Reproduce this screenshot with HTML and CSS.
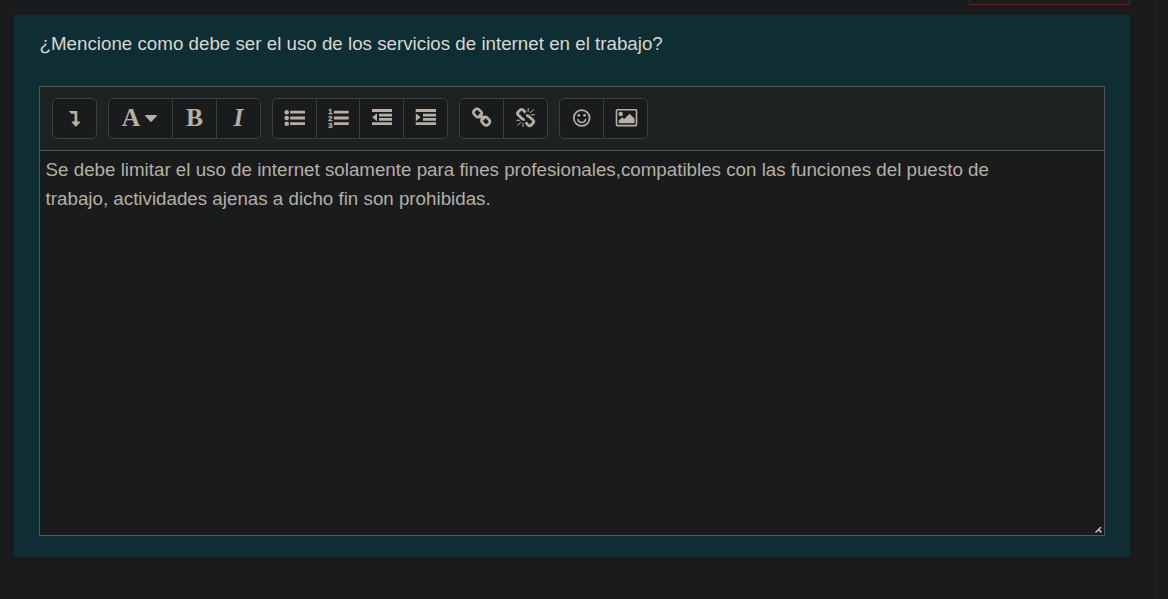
FILE: index.html
```html
<!DOCTYPE html>
<html lang="es">
<head>
<meta charset="utf-8">
<title>Cuestionario</title>
<link rel="stylesheet" href="styles.css">
</head>
<body>
<div class="page">
  <main class="main">
    <div class="notice"></div>
    <section class="question">
      <p class="prompt">¿Mencione como debe ser el uso de los servicios de internet en el trabajo?</p>
      <div class="editor">
        <div class="toolbar">
          <div class="group">
            <span class="btn"><svg class="icon" viewBox="0 0 27 27"><path d="M7.8 5.9h8q.5 0 .5.6v10.1h2.3q.9.2.4 1l-3.5 3.7q-.6.6-1.2 0L10.8 17.6q-.5-.8.4-1h2.3V8.8h-3.3z"/></svg></span>
          </div>
          <div class="group">
            <span class="btn wide"><span class="letter">A</span><svg class="caret" viewBox="0 0 12 7"><path d="M.8 0h10.4q1 .3.4 1.2L6.7 6.4q-.7.6-1.4 0L.4 1.2Q-.2.3.8 0z"/></svg></span>
            <span class="btn"><span class="letter">B</span></span>
            <span class="btn"><span class="letter italic">I</span></span>
          </div>
          <div class="group">
            <span class="btn"><svg class="icon" viewBox="0 0 27 27"><circle cx="5.7" cy="7.2" r="2.3"/><circle cx="5.7" cy="13" r="2.3"/><circle cx="5.7" cy="18.7" r="2.3"/><path d="M9.2 5.8H24v2.8H9.2zM9.2 11.6H24v2.8H9.2zM9.2 17.3H24v2.8H9.2z"/></svg></span>
            <span class="btn narrow"><svg class="icon" viewBox="0 0 27 27"><path d="M9 5.8h14.7v2.8H9zM9 11.6h14.7v2.8H9zM9 17.3h14.7v2.8H9z"/><text class="digit" x="3.2" y="8.5">1</text><text class="digit" x="3.2" y="15.6">2</text><text class="digit" x="3.2" y="22.7">3</text></svg></span>
            <span class="btn"><svg class="icon" viewBox="0 0 27 27"><path d="M4 4h20v3H4zM11 8.7h13v2.7H11zM11 13h13v2.7H11zM4 17.3h20V20H4zM9 8.2v8L4.2 12.3z"/></svg></span>
            <span class="btn"><svg class="icon" viewBox="0 0 27 27"><path d="M3.7 4H24v3H3.7zM11 8.7h13v2.7H11zM11 13h13v2.7H11zM3.7 17.3H24V20H3.7zM3.8 8.2v8L8.6 12.3z"/></svg></span>
          </div>
          <div class="group">
            <span class="btn"><svg class="icon" viewBox="0 0 27 27"><g class="line" stroke-width="2.7"><rect x="5.4" y="4.6" width="8.4" height="6.8" rx="2.8" transform="rotate(45 9.6 8)"/><rect x="13.5" y="12.7" width="8.4" height="6.8" rx="2.8" transform="rotate(45 17.7 16.1)"/><path d="M11 9.4l5.3 5.3"/></g></svg></span>
            <span class="btn"><svg class="icon" viewBox="0 0 27 27"><g class="line" stroke-width="2.8"><path d="M13.6 7.5L11.1 5q-1.5-1.2-2.9 0L6.1 7q-1.3 1.4 0 2.8l4 4q1.2.9 2.6.3M14.2 10.9q1.4-.5 2.5.4l4.4 4q1.3 1.4 0 2.8l-2 2q-1.4 1.2-2.9 0l-2.6-2.7"/></g><g class="line" stroke-width="1"><path d="M16.2 3v4M17.9 8l4-3.6M19 9.7h4M11 17.9V22M9.3 17l-4 3.7M8.2 15.3h-4"/></g></svg></span>
          </div>
          <div class="group">
            <span class="btn"><svg class="icon" viewBox="0 0 27 27"><circle class="line" cx="13.7" cy="13" r="7.9" stroke-width="1.7"/><circle cx="10.8" cy="10.3" r="1.4"/><circle cx="16.6" cy="10.3" r="1.4"/><path class="line" d="M9.8 14.7q1.2 2.8 3.9 2.8t3.9-2.8" stroke-width="1.6" stroke-linecap="round"/></svg></span>
            <span class="btn"><svg class="icon" viewBox="0 0 27 27"><rect class="line" x="4.5" y="4.8" width="20" height="15.8" rx=".8" stroke-width="1.6"/><circle cx="8.7" cy="9" r="2.2"/><path d="M6.7 18.3v-2.8l3.6-3.3 1.9 1.9 5.4-5.4 4.9 4.9v4.7z"/></svg></span>
          </div>
        </div>
        <div class="content">Se debe limitar el uso de internet solamente para fines profesionales,compatibles con las funciones del puesto de<br>trabajo, actividades ajenas a dicho fin son prohibidas.
          <svg class="grip" viewBox="0 0 9 9"><path class="shade" d="M0 7L7 0v3L3 7z"/><path class="light" d="M1.5 7.5l5.5-5.5M4.8 4.8l2.5 2.5"/></svg>
        </div>
      </div>
    </section>
  </main>
  <aside class="rail"></aside>
</div>
</body>
</html>
```
FILE: styles.css
```css
* { box-sizing: border-box; }
body {
  margin: 0;
  background: #1a1b1d;
  font: 18.75px/29px "Liberation Sans", Arial, sans-serif;
}
.page { display: flex; height: 599px; overflow: hidden; }
.main { width: 1156px; padding: 0 26px 0 14px; }
.rail { flex: 1; border-left: 1px solid #27282a; }
.notice {
  width: 161px;
  height: 5px;
  margin: 0 0 10px auto;
  border: 1px solid #a80008;
  border-top: 0;
}
.question {
  height: 542px;
  padding: 14px 25px 0;
  background: #0f2e33;
}
.prompt {
  height: 29px;
  margin: 0 0 28px;
  padding-left: .5px;
  color: #d9d6d0;
  white-space: nowrap;
}
.editor {
  display: flex;
  flex-direction: column;
  height: 450px;
  border: 1px solid #525859;
  background: #1a1b1d;
}
.toolbar {
  display: flex;
  gap: 11px;
  height: 64px;
  padding: 11px 12px;
  border-bottom: 1px solid #525859;
  background: #1f2223;
}
.group {
  display: flex;
  height: 41px;
  border: 1px solid #3a4143;
  border-radius: 5px;
  background: #1a1b1d;
}
.btn {
  display: flex;
  box-sizing: content-box;
  width: 43px;
  height: 39px;
  align-items: center;
  justify-content: center;
}
.btn + .btn { border-left: 1px solid #3a4143; }
.narrow { width: 42px; }
.wide { width: 61px; padding-right: 2px; gap: 5px; }
.icon { display: block; width: 27px; height: 27px; fill: #b5afa5; }
.caret { width: 12px; height: 7px; fill: #b5afa5; }
.line { fill: none; stroke: #b5afa5; }
.letter {
  padding-bottom: 1px;
  color: #b5afa5;
  font: bold 25.5px/38px "Liberation Serif", serif;
}
.italic { font-style: italic; }
.digit {
  font: bold 7.6px "Liberation Sans", sans-serif;
  stroke: #b5afa5;
  stroke-width: .3px;
}
.content {
  position: relative;
  flex: 1;
  padding: 4px 5.6px;
  color: #b5afa5;
  white-space: nowrap;
}
.grip { position: absolute; right: 1px; bottom: 1px; width: 9px; height: 9px; }
.shade { fill: #050505; }
.light { fill: none; stroke: #bcbcbc; stroke-width: 1.7; }
```
